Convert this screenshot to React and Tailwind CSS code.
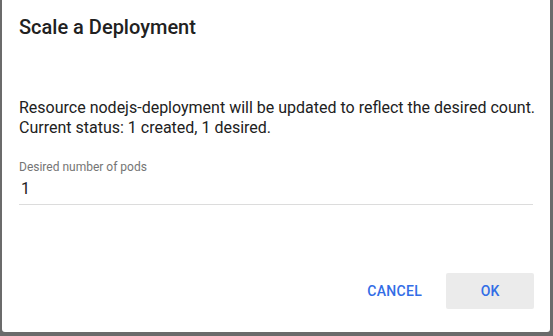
export default function App() {
  return (
    <div className="w-[553px] h-[336px] bg-[#6b6b6b] pl-[2px] pr-[3px] pb-[4px]" style={{ fontFamily: "Roboto, 'Liberation Sans', sans-serif" }}>
      <div className="w-full h-full bg-white rounded-b-[3px] flex flex-col">
        <div className="px-[17px] pt-[15px] text-[20px] font-medium leading-[24px] text-[#212121]">Scale a Deployment</div>
        <div className="pl-[17px] pt-[59px] text-[16px] leading-[20px] text-[#212121] whitespace-nowrap">
          <div>Resource nodejs-deployment will be updated to reflect the desired count.</div>
          <div>Current status: 1 created, 1 desired.</div>
        </div>
        <div className="mx-[17px] mt-[22px] border-b border-[#dcdcdc]">
          <div className="text-[12px] leading-[14px] text-[#757575]">Desired number of pods</div>
          <div className="text-[16px] leading-[20px] pt-[5px] pb-[5px] text-[#212121] pl-[2px]">1</div>
        </div>
        <div className="flex-1" />
        <div className="flex justify-end items-center gap-[8px] pr-[16px] pb-[23px]">
          <button className="h-[36px] px-[16px] text-[14px] font-medium text-[#326de6] tracking-[0.3px] rounded-[2px]">CANCEL</button>
          <button className="h-[36px] w-[88px] text-[14px] font-medium text-[#326de6] bg-[#ebebeb] rounded-[2px]">OK</button>
        </div>
      </div>
    </div>
  );
}
